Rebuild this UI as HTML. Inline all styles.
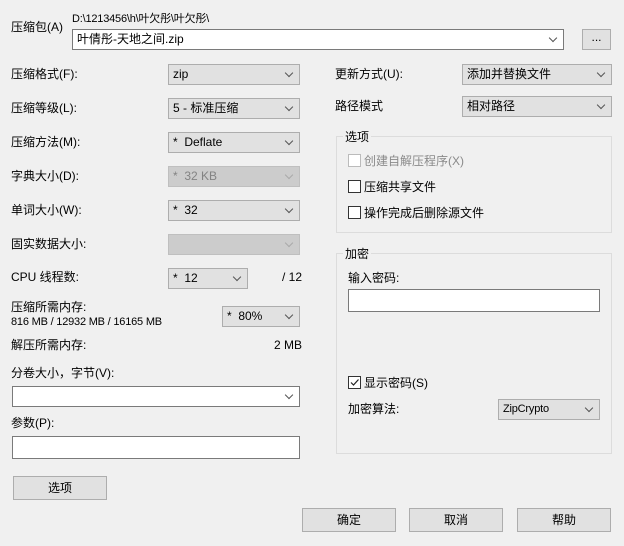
<!DOCTYPE html>
<html><head><meta charset="utf-8"><style>
body{margin:0;width:624px;height:546px;background:#f0f0f0;font-family:"Liberation Sans","Noto Sans CJK SC",sans-serif;font-size:12px;color:#000;position:relative;overflow:hidden}
.a{position:absolute;white-space:nowrap;line-height:14px}
.cb{position:absolute;box-sizing:border-box;height:21px;background:#e1e1e1;border:1px solid #adadad;padding:2px 0 0 4px;line-height:14px}
.cb::after{content:"";position:absolute;right:7px;top:5px;width:5px;height:5px;border-right:1px solid #555;border-bottom:1px solid #555;transform:rotate(45deg)}
.dis{background:#ccc;border-color:#bfbfbf;color:#838383}
.dis::after{border-color:#aaa}
.w{background:#fff;border-color:#7a7a7a}
.in{position:absolute;box-sizing:border-box;background:#fff;border:1px solid #7a7a7a}
.btn{position:absolute;box-sizing:border-box;height:24px;background:#e1e1e1;border:1px solid #adadad;text-align:center;line-height:22px}
.gb{position:absolute;box-sizing:border-box;border:1px solid #dcdcdc}
.gt{position:absolute;background:#f0f0f0;padding:0 2px;line-height:14px}
.ck{position:absolute;width:11px;height:11px;border:1px solid #333;background:#fff}
.n{font-size:11px;letter-spacing:-0.2px}
</style></head><body>
<div class="a" style="left:11px;top:20px">压缩包(A)</div>
<div class="a n" style="left:72px;top:12px">D:\1213456\h\叶欠彤\叶欠彤\</div>
<div class="cb w" style="left:72px;top:29px;width:492px;height:21px">叶倩彤-天地之间.zip</div>
<div class="btn" style="left:582px;top:29px;width:29px;height:21px;line-height:15px">...</div>

<div class="a" style="left:11px;top:67px">压缩格式(F):</div>
<div class="cb" style="left:168px;top:64px;width:132px">zip</div>
<div class="a" style="left:11px;top:101px">压缩等级(L):</div>
<div class="cb" style="left:168px;top:98px;width:132px">5 - 标准压缩</div>
<div class="a" style="left:11px;top:135px">压缩方法(M):</div>
<div class="cb" style="left:168px;top:132px;width:132px">*&nbsp; Deflate</div>
<div class="a" style="left:11px;top:169px">字典大小(D):</div>
<div class="cb dis" style="left:168px;top:166px;width:132px">*&nbsp; 32 KB</div>
<div class="a" style="left:11px;top:203px">单词大小(W):</div>
<div class="cb" style="left:168px;top:200px;width:132px">*&nbsp; 32</div>
<div class="a" style="left:11px;top:237px">固实数据大小:</div>
<div class="cb dis" style="left:168px;top:234px;width:132px"></div>
<div class="a" style="left:11px;top:270px">CPU 线程数:</div>
<div class="cb" style="left:168px;top:268px;width:80px">*&nbsp; 12</div>
<div class="a" style="left:282px;top:270px">/ 12</div>
<div class="a" style="left:11px;top:300px">压缩所需内存:</div>
<div class="a n" style="left:11px;top:315px">816 MB / 12932 MB / 16165 MB</div>
<div class="cb" style="left:222px;top:306px;width:78px">*&nbsp; 80%</div>
<div class="a" style="left:11px;top:338px">解压所需内存:</div>
<div class="a" style="left:274px;top:338px">2 MB</div>
<div class="a" style="left:11px;top:366px">分卷大小，字节(V):</div>
<div class="cb w" style="left:12px;top:386px;width:288px"></div>
<div class="a" style="left:11px;top:416px">参数(P):</div>
<div class="in" style="left:12px;top:436px;width:288px;height:23px"></div>
<div class="btn" style="left:13px;top:476px;width:94px">选项</div>

<div class="a" style="left:335px;top:67px">更新方式(U):</div>
<div class="cb" style="left:462px;top:64px;width:150px">添加并替换文件</div>
<div class="a" style="left:335px;top:99px">路径模式</div>
<div class="cb" style="left:462px;top:96px;width:150px">相对路径</div>

<div class="gb" style="left:336px;top:136px;width:276px;height:97px"></div>
<div class="gt" style="left:343px;top:130px">选项</div>
<div class="ck" style="left:348px;top:154px;border-color:#bbb"></div>
<div class="a" style="left:364px;top:154px;color:#8a8a8a">创建自解压程序(X)</div>
<div class="ck" style="left:348px;top:180px"></div>
<div class="a" style="left:364px;top:180px">压缩共享文件</div>
<div class="ck" style="left:348px;top:206px"></div>
<div class="a" style="left:364px;top:206px">操作完成后删除源文件</div>

<div class="gb" style="left:336px;top:253px;width:276px;height:201px"></div>
<div class="gt" style="left:343px;top:247px">加密</div>
<div class="a" style="left:348px;top:271px">输入密码:</div>
<div class="in" style="left:348px;top:289px;width:252px;height:23px"></div>
<div class="ck" style="left:348px;top:376px"><svg width="11" height="11" style="position:absolute;left:0;top:0"><path d="M2 5.5 L4.5 8 L9.5 2.5" stroke="#222" stroke-width="1.2" fill="none"/></svg></div>
<div class="a" style="left:364px;top:376px">显示密码(S)</div>
<div class="a" style="left:348px;top:402px">加密算法:</div>
<div class="cb n" style="left:498px;top:399px;width:102px">ZipCrypto</div>

<div class="btn" style="left:302px;top:508px;width:94px">确定</div>
<div class="btn" style="left:409px;top:508px;width:94px">取消</div>
<div class="btn" style="left:517px;top:508px;width:94px">帮助</div>
</body></html>
